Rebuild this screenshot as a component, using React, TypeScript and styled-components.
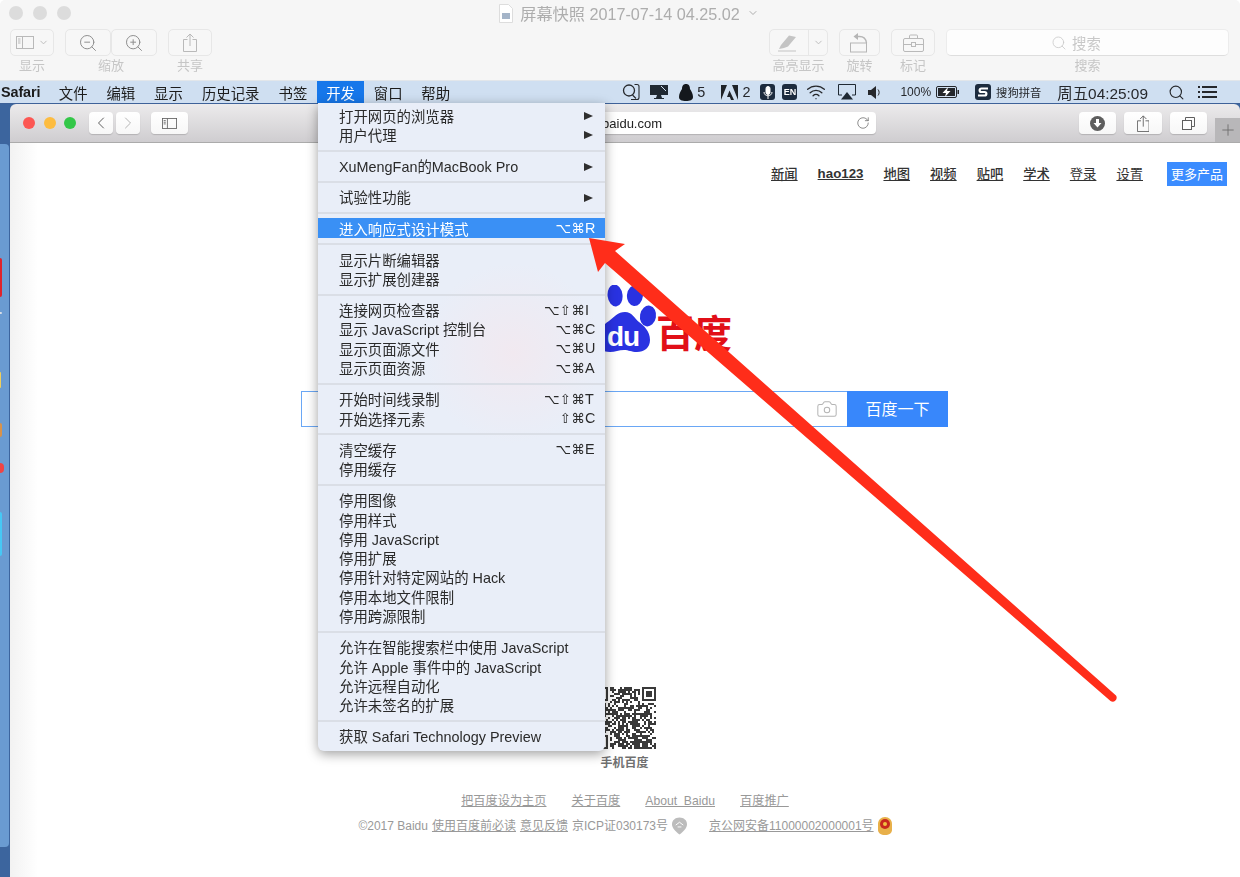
import React from "react";
import styled, { createGlobalStyle } from "styled-components";
import {
  Camera,
  ChevronDown,
  ChevronLeft,
  ChevronRight,
  Plus,
  RotateCw,
  Search,
  Wifi,
  ZoomIn,
  ZoomOut,
} from "lucide-react";

const UI_FONT = `"Liberation Sans", "Noto Sans CJK SC", "DejaVu Sans", sans-serif`;

const GlobalStyle = createGlobalStyle`
  html, body {
    margin: 0;
    background: #fff;
  }
  body {
    font-family: ${UI_FONT};
    overflow: hidden;
  }
`;

const Screen = styled.div`
  position: relative;
  width: 1240px;
  height: 877px;
  overflow: hidden;
  display: flex;
  flex-direction: column;
  filter: blur(0.35px);
`;

/* ---------- Preview window toolbar ---------- */

const PreviewBar = styled.header`
  height: 80px;
  flex: none;
  background: #f6f6f6;
  border-radius: 5px 5px 0 0;
  display: flex;
  flex-direction: column;
`;

const TitleRow = styled.div`
  height: 29px;
  flex: none;
  box-sizing: border-box;
  padding: 0 9px 3px;
  display: grid;
  grid-template-columns: 1fr auto 1fr;
  align-items: center;
`;

const GrayLights = styled.div`
  display: flex;
  gap: 10px;
`;

const GrayLight = styled.span`
  width: 14px;
  height: 14px;
  border-radius: 50%;
  background: #dcdcdc;
`;

const DocTitle = styled.div`
  display: flex;
  align-items: center;
  gap: 7px;
  font-size: 16.2px;
  color: #adadad;
  white-space: nowrap;
  padding-left: 18px;
`;

const ToolsRow = styled.div`
  display: flex;
  padding: 0 11px 0 10px;
  gap: 11px;
`;

const ToolGroup = styled.div`
  display: flex;
  flex-direction: column;
  align-items: center;
  flex: none;
`;

const ToolButtons = styled.div`
  display: flex;
`;

const ToolButton = styled.div<{ $w: number }>`
  width: ${(p) => p.$w}px;
  height: 27px;
  box-sizing: border-box;
  border: 1px solid #e7e7e7;
  border-radius: 5px;
  background: #f7f7f7;
  color: #b9b9b9;
  display: flex;
  align-items: center;
  justify-content: center;
  gap: 4px;
`;

const SplitCell = styled.div<{ $w: number; $line?: boolean }>`
  width: ${(p) => p.$w}px;
  height: 100%;
  display: flex;
  align-items: center;
  justify-content: center;
  border-left: ${(p) => (p.$line ? "1px solid #e7e7e7" : "none")};
`;

const ToolLabel = styled.span`
  font-size: 13px;
  line-height: 16px;
  margin-top: 2px;
  color: #c6c6c6;
  white-space: nowrap;
`;

const ToolSpacer = styled.div`
  flex: 1;
`;

const SearchField = styled.div`
  width: 283px;
  height: 27px;
  box-sizing: border-box;
  padding-right: 23px;
  border-radius: 5px;
  background: #fdfdfd;
  border: 1px solid #ececec;
  border-bottom: 1px solid #dedede;
  color: #c8c8c8;
  font-size: 14.4px;
  display: flex;
  align-items: center;
  justify-content: center;
  gap: 5px;
`;

/* ---------- Menu bar ---------- */

const MenuBar = styled.nav`
  height: 23px;
  flex: none;
  box-sizing: border-box;
  background: #cfdff1;
  border-top: 1px solid #e2e6ea;
  display: flex;
  align-items: center;
  font-size: 14.4px;
  color: #1c1c1c;
  white-space: nowrap;
`;

const AppName = styled.span`
  font-weight: 700;
  padding: 0 9px 0 1px;
  letter-spacing: -0.1px;
`;

const MenuTitle = styled.span<{ $active?: boolean; $w: number }>`
  height: 100%;
  display: flex;
  align-items: center;
  width: ${(p) => p.$w}px;
  justify-content: center;
  background: ${(p) => (p.$active ? "#1677ea" : "transparent")};
  color: ${(p) => (p.$active ? "#fff" : "inherit")};
`;

const StatusItems = styled.div`
  margin-left: auto;
  display: flex;
  align-items: center;
  padding-right: 23px;
  color: #26282c;
`;

const StatusCell = styled.span<{ $ml: number; $size?: number }>`
  margin-left: ${(p) => p.$ml}px;
  font-size: ${(p) => p.$size ?? 14.4}px;
  display: flex;
  align-items: center;
`;

const DarkTile = styled.span<{ $w: number }>`
  width: ${(p) => p.$w}px;
  height: 16px;
  border-radius: 3px;
  background: #1c2b3e;
  color: #fff;
  font-size: 9px;
  font-weight: 700;
  display: flex;
  align-items: center;
  justify-content: center;
`;

/* ---------- Desktop + Safari ---------- */

const Desktop = styled.div`
  flex: 1;
  display: flex;
  background: #3c659e;
  min-height: 0;
  border-top: 1px solid #3e6299;
`;

const Dock = styled.aside`
  width: 9px;
  margin: 40px 1px 30px 0;
  flex: none;
  background: #6a9bd1;
  border-radius: 0 4px 4px 0;
  display: flex;
  flex-direction: column;
  overflow: hidden;
`;

const DockIcon = styled.span<{ $mt: number; $h: number; $w: number; $c: string; $round?: boolean }>`
  margin-top: ${(p) => p.$mt}px;
  height: ${(p) => p.$h}px;
  width: ${(p) => p.$w}px;
  flex: none;
  background: ${(p) => p.$c};
  border-radius: ${(p) => (p.$round ? "0 5px 5px 0" : "0 3px 3px 0")};
`;

const SafariWindow = styled.main`
  flex: 1;
  display: flex;
  flex-direction: column;
  min-width: 0;
`;

const SafariBar = styled.div`
  height: 39px;
  flex: none;
  box-sizing: border-box;
  border-radius: 6px 6px 0 0;
  border-bottom: 1px solid #ababab;
  background: linear-gradient(#ecebec, #cfcdd0);
  display: flex;
  padding: 8px 0 0 13px;
`;

const Lights = styled.div`
  height: 22px;
  display: flex;
  align-items: center;
  gap: 8.5px;
  margin-right: 13px;
`;

const Light = styled.span<{ $c: string }>`
  width: 12px;
  height: 12px;
  border-radius: 50%;
  background: ${(p) => p.$c};
`;

const BarButton = styled.div<{ $w: number; $ml?: number; $dim?: boolean }>`
  width: ${(p) => p.$w}px;
  height: 22px;
  flex: none;
  margin-left: ${(p) => p.$ml ?? 0}px;
  border-radius: 4px;
  background: linear-gradient(#fff, #f7f7f7);
  box-shadow: 0 1px 1px rgba(0, 0, 0, 0.16);
  color: ${(p) => (p.$dim ? "#b4b4b4" : "#5f5f5f")};
  display: flex;
  align-items: center;
  justify-content: center;
`;

const UrlBar = styled.div`
  width: 546px;
  height: 22px;
  flex: none;
  margin-left: 142px;
  box-sizing: border-box;
  border-radius: 4px;
  background: #fff;
  box-shadow: 0 1px 1px rgba(0, 0, 0, 0.16);
  display: flex;
  align-items: center;
  padding: 0 6px 0 241px;
  font-size: 13px;
  color: #222;
`;

const UrlText = styled.span`
  flex: 1;
`;

const NewTab = styled.div`
  width: 25px;
  height: 24px;
  margin-left: 8px;
  margin-top: 6px;
  flex: none;
  background: #b8b7b9;
  color: #6d6d6d;
  display: flex;
  align-items: center;
  justify-content: center;
`;

/* ---------- Baidu page ---------- */

const Page = styled.section`
  flex: 1;
  min-height: 0;
  background: linear-gradient(90deg, #f2f2f2, #fff 28px);
  display: flex;
  flex-direction: column;
  align-items: center;
`;

const TopNav = styled.div`
  align-self: stretch;
  margin-top: 19px;
  height: 24px;
  display: flex;
  justify-content: flex-end;
  align-items: center;
  padding-right: 13px;
  gap: 20px;
  font-size: 13.3px;
`;

const NavLink = styled.a<{ $weight: number }>`
  position: relative;
  top: -1px;
  color: #333;
  font-weight: ${(p) => p.$weight};
  text-decoration: underline;
`;

const MoreButton = styled.span`
  width: 60px;
  height: 24px;
  box-sizing: border-box;
  padding-bottom: 2px;
  margin-left: 4px;
  background: #3b8cff;
  color: #fff;
  font-size: 13px;
  display: flex;
  align-items: center;
  justify-content: center;
`;

const LogoBox = styled.div`
  margin-top: 99px;
  height: 70px;
`;

const SearchRow = styled.div`
  margin: 36px 1px 0 0;
  width: 647px;
  height: 36px;
  display: flex;
`;

const SearchInput = styled.div`
  flex: 1;
  box-sizing: border-box;
  border: 1px solid #6aa7f5;
  border-right: none;
  display: flex;
  align-items: center;
  justify-content: flex-end;
  padding-right: 9px;
  color: #b4b4b4;
`;

const SearchSubmit = styled.div`
  width: 101px;
  background: #3887fb;
  color: #fff;
  font-size: 16px;
  padding-bottom: 2px;
  box-sizing: border-box;
  display: flex;
  align-items: center;
  justify-content: center;
`;

const QrBox = styled.div`
  margin-top: 260px;
  width: 62px;
  height: 62px;
`;

const QrCaption = styled.div`
  margin: 7px 1px 0 0;
  font-size: 12px;
  line-height: 14px;
  font-weight: 700;
  color: #707070;
`;

const FooterLinks = styled.div`
  margin-top: 23px;
  display: flex;
  gap: 25px;
  font-size: 12.2px;
  line-height: 16px;
`;

const FooterLink = styled.a<{ $gap?: number }>`
  margin-left: ${(p) => p.$gap ?? 0}px;
  color: #999;
  text-decoration: underline;
`;

const FooterLine = styled.div`
  margin-top: 8px;
  display: flex;
  align-items: center;
  gap: 4px;
  font-size: 12px;
  line-height: 16px;
  color: #999;
  white-space: nowrap;
`;

/* ---------- Develop menu ---------- */

const DropMenu = styled.div`
  position: absolute;
  left: 318px;
  top: 103px;
  width: 287px;
  height: 648px;
  box-sizing: border-box;
  padding-top: 2.5px;
  border-radius: 0 0 6px 6px;
  background: radial-gradient(circle at 195px 250px, #f1e9f0 0, rgba(241, 233, 240, 0) 90px), #e9eef8;
  box-shadow: 0 3px 12px rgba(0, 0, 0, 0.38);
  font-size: 14.4px;
  color: #2a2a2a;
`;

const MenuRow = styled.div<{ $hot?: boolean }>`
  height: 19.3px;
  display: flex;
  align-items: center;
  padding: 0 7px 0 21px;
  white-space: nowrap;
  background: ${(p) => (p.$hot ? "#3a90f5" : "transparent")};
  color: ${(p) => (p.$hot ? "#fff" : "inherit")};
`;

const MenuDivider = styled.div`
  height: 2px;
  margin: 5.6px 0 4.3px;
  background: #dadee6;
`;

const Shortcut = styled.span`
  margin-left: auto;
  display: flex;
  align-items: center;
  font-family: "DejaVu Sans", sans-serif;
  font-size: 13.5px;
`;

const ShortcutMods = styled.span`
  letter-spacing: 0.2px;
`;

const ShortcutKey = styled.span`
  width: 13px;
  font-family: "Liberation Sans", sans-serif;
  font-size: 14.4px;
`;

const SubArrow = styled.span`
  margin: 2px 5px 0 auto;
  width: 0;
  height: 0;
  border-left: 9px solid #2f2f2f;
  border-top: 4.5px solid transparent;
  border-bottom: 4.5px solid transparent;
`;

const ArrowLayer = styled.svg`
  position: absolute;
  left: 0;
  top: 0;
  pointer-events: none;
`;

/* ---------- Data ---------- */

type Item = { label: string; mods?: string; key?: string; sub?: boolean; hot?: boolean };

const menuGroups: Item[][] = [
  [
    { label: "打开网页的浏览器", sub: true },
    { label: "用户代理", sub: true },
  ],
  [{ label: "XuMengFan的MacBook Pro", sub: true }],
  [{ label: "试验性功能", sub: true }],
  [{ label: "进入响应式设计模式", mods: "⌥⌘", key: "R", hot: true }],
  [{ label: "显示片断编辑器" }, { label: "显示扩展创建器" }],
  [
    { label: "连接网页检查器", mods: "⌥⇧⌘", key: "I" },
    { label: "显示 JavaScript 控制台", mods: "⌥⌘", key: "C" },
    { label: "显示页面源文件", mods: "⌥⌘", key: "U" },
    { label: "显示页面资源", mods: "⌥⌘", key: "A" },
  ],
  [
    { label: "开始时间线录制", mods: "⌥⇧⌘", key: "T" },
    { label: "开始选择元素", mods: "⇧⌘", key: "C" },
  ],
  [{ label: "清空缓存", mods: "⌥⌘", key: "E" }, { label: "停用缓存" }],
  [
    { label: "停用图像" },
    { label: "停用样式" },
    { label: "停用 JavaScript" },
    { label: "停用扩展" },
    { label: "停用针对特定网站的 Hack" },
    { label: "停用本地文件限制" },
    { label: "停用跨源限制" },
  ],
  [
    { label: "允许在智能搜索栏中使用 JavaScript" },
    { label: "允许 Apple 事件中的 JavaScript" },
    { label: "允许远程自动化" },
    { label: "允许未签名的扩展" },
  ],
  [{ label: "获取 Safari Technology Preview" }],
];

const menuTitles = [
  { t: "文件", w: 47.6 },
  { t: "编辑", w: 47.6 },
  { t: "显示", w: 47.6 },
  { t: "历史记录", w: 77 },
  { t: "书签", w: 47.6 },
  { t: "开发", w: 47.6, active: true },
  { t: "窗口", w: 47.6 },
  { t: "帮助", w: 47.6 },
];

const navLinks = [
  { t: "新闻", w: 500 },
  { t: "hao123", w: 700 },
  { t: "地图", w: 500 },
  { t: "视频", w: 500 },
  { t: "贴吧", w: 500 },
  { t: "学术", w: 500 },
  { t: "登录", w: 400 },
  { t: "设置", w: 400 },
];

/* ---------- Drawings ---------- */

const SidebarGlyph = ({ w = 18, h = 13 }: { w?: number; h?: number }) => (
  <svg width={w} height={h} viewBox="0 0 18 13" fill="none" stroke="currentColor">
    <rect x="0.5" y="0.5" width="17" height="12" />
    <path d="M6.5 0.5v12M2 3h2.5M2 5h2.5M2 7h2.5" />
  </svg>
);

const ShareGlyph = ({ h = 19 }: { h?: number }) => (
  <svg width={(h * 14) / 19} height={h} viewBox="0 0 14 19" fill="none" stroke="currentColor">
    <path d="M4.500 6.500H.5v12h13v-12h-4" />
    <path d="M7 13V1M3.500 4.500L7 1l3.500 3.500" />
  </svg>
);

const HighlightGlyph = () => (
  <svg width="20" height="18" viewBox="0 0 20 18" fill="#c4c4c4">
    <path d="M1 16.500h18v1H1zM2 15l2-4L12 1.500l7 1.500-8 9.500-4 1.500z" />
  </svg>
);

const RotateGlyph = () => (
  <svg width="19" height="20" viewBox="0 0 19 20" fill="none" stroke="#b5b5b5" strokeWidth="1">
    <rect x="0.500" y="10" width="16" height="9" />
    <path d="M7 3.500h2.500c4 0 6.500 2.500 7 6.500" strokeWidth="1.300" />
    <path d="M8 0L3.500 3.500 8 7z" fill="#b5b5b5" stroke="none" />
  </svg>
);

const ToolboxGlyph = () => (
  <svg width="21" height="18" viewBox="0 0 21 18" fill="none" stroke="#b9b9b9">
    <rect x="0.500" y="4.500" width="20" height="13" rx="1.500" />
    <path d="M6.500 4.500v-2.500a1 1 0 0 1 1-1h6a1 1 0 0 1 1 1v2.500M.5 10.500h8M12.500 10.500h8" />
    <rect x="8.500" y="8.500" width="4" height="4" />
  </svg>
);

const DocGlyph = () => (
  <svg width="14" height="19" viewBox="0 0 14 19">
    <path d="M.5.5h9l4 4v14H.5z" fill="#fff" stroke="#ddd" />
    <rect x="3" y="9" width="8" height="6" fill="#a4b4c8" />
  </svg>
);

const QqSearchGlyph = () => (
  <svg width="18" height="18" viewBox="0 0 18 18" fill="none" stroke="#26282c" strokeWidth="1.300">
    <circle cx="7" cy="7.500" r="5.500" />
    <path d="M10.500 12l3.500 3.500M12.500 1.500h2.500a2 2 0 0 1 2 2v11a2 2 0 0 1-2 2H9" strokeWidth="1.100" />
  </svg>
);

const MonitorGlyph = () => (
  <svg width="18" height="16" viewBox="0 0 18 16" fill="#1f2933">
    <path d="M0 1h18v10H0zM7 11h4l1 3h2v1H4v-1h2z" />
    <path d="M11 2l5 5" stroke="#cfdff1" strokeWidth="1" />
  </svg>
);

const PenguinGlyph = () => (
  <svg width="14" height="17" viewBox="0 0 14 17" fill="#14181d">
    <path d="M7 0c3 0 4 2.200 4 5 1.500 2 3 5 3 8 0 3-3 4-7 4s-7-1-7-4c0-3 1.500-6 3-8 0-2.800 1-5 4-5z" />
  </svg>
);

const AdobeGlyph = () => (
  <svg width="17" height="15" viewBox="0 0 17 15" fill="#1f2328">
    <path d="M0 15V0h6zM17 15V0h-6zM8.500 5.500l4.500 9.500h-3l-1.200-3H6z" />
  </svg>
);

const MicGlyph = () => (
  <svg width="10" height="13" viewBox="0 0 10 13" fill="none" stroke="#fff" strokeWidth="1">
    <rect x="3" y="0.500" width="4" height="8" rx="2" fill="#fff" />
    <path d="M1 6c0 5 8 5 8 0M5 10v3" />
  </svg>
);

const AirplayGlyph = () => (
  <svg width="18" height="16" viewBox="0 0 18 16">
    <path d="M4 11H.5V.5h17V11H14" fill="none" stroke="#1f2933" />
    <path d="M9 8l6 7.500H3z" fill="#1f2933" />
  </svg>
);

const VolumeGlyph = () => (
  <svg width="14" height="13" viewBox="0 0 14 13" fill="#26282c">
    <path d="M0 4h3l5-4v13L3 9H0z" />
    <path d="M10 3.500c1.500 1.500 1.500 4.500 0 6" fill="none" stroke="#26282c" />
  </svg>
);

const BatteryGlyph = () => (
  <svg width="23" height="12" viewBox="0 0 23 12">
    <rect x="0.500" y="0.500" width="20" height="11" rx="1.500" fill="none" stroke="#26282c" />
    <rect x="2" y="2" width="17" height="8" fill="#26282c" />
    <rect x="21.500" y="4" width="1.500" height="4" fill="#26282c" />
    <path d="M12 1L6.500 7H10l-1 4 5.500-6H11z" fill="#fff" />
  </svg>
);

const SogouGlyph = () => (
  <svg width="12" height="12" viewBox="0 0 12 12" fill="none" stroke="#fff" strokeWidth="2.200">
    <path d="M11 2.500H4.500C2 2.500 2 6 4.500 6h3c2.500 0 2.500 3.500 0 3.500H1" />
  </svg>
);

const ListGlyph = () => (
  <svg width="19" height="12" viewBox="0 0 19 12" fill="#26282c">
    <path d="M0 0h2v2H0zM0 5h2v2H0zM0 10h2v2H0zM4 0h15v2H4zM4 5h15v2H4zM4 10h15v2H4z" />
  </svg>
);

const TabsGlyph = () => (
  <svg width="13" height="13" viewBox="0 0 13 13" fill="none" stroke="currentColor">
    <rect x="0.500" y="3.500" width="9" height="9" fill="#fff" />
    <path d="M3.500 3.500v-3h9v9h-3" />
  </svg>
);

const DownloadGlyph = () => (
  <svg width="15" height="15" viewBox="0 0 15 15">
    <circle cx="7.500" cy="7.500" r="7.500" fill="#5e5e5e" />
    <path d="M6 3h3v4h2.500l-4 4.500-4-4.500H6z" fill="#fff" />
  </svg>
);

const BaiduLogo = () => (
  <svg width="240" height="70" viewBox="505 285 240 70">
    <g fill="#2932e1">
      <ellipse cx="615" cy="295.500" rx="7.500" ry="11" transform="rotate(-6 615 295)" />
      <ellipse cx="635" cy="295.500" rx="8" ry="10.500" transform="rotate(6 635 295)" />
      <ellipse cx="648" cy="316" rx="8" ry="10.500" transform="rotate(10 648 316)" />
      <path d="M625 312c7 0 9 6 14 10 5 4 11 9 11 18 0 8-6 12-13 12-6 0-8-2-13-2s-9 2-14 2c-8 0-14-4-14-12 0-9 7-15 13-19 5-4 9-9 16-9z" />
    </g>
    <text x="607" y="346" fontFamily="Liberation Sans, sans-serif" fontWeight="700" fontSize="28" letterSpacing="-1" fill="#fff">
      du
    </text>
    <text x="656" y="347" fontFamily="Noto Sans CJK SC, sans-serif" fontWeight="700" fontSize="38" fill="#e10f18">
      百度
    </text>
  </svg>
);

// deterministic pseudo random pattern for the QR body
const qrCells = (() => {
  const n = 31;
  const cells: [number, number][] = [];
  const finder = (cx: number, cy: number) => {
    for (let y = 0; y < 7; y++)
      for (let x = 0; x < 7; x++) {
        const edge = x === 0 || y === 0 || x === 6 || y === 6;
        const core = x >= 2 && x <= 4 && y >= 2 && y <= 4;
        if (edge || core) cells.push([cx + x, cy + y]);
      }
  };
  finder(0, 0);
  finder(n - 7, 0);
  finder(0, n - 7);
  let seed = 73;
  for (let y = 0; y < n; y++)
    for (let x = 0; x < n; x++) {
      seed = (seed * 1103515245 + 12345) & 0x7fffffff;
      const inFinder = (x < 8 && y < 8) || (x > n - 9 && y < 8) || (x < 8 && y > n - 9);
      if (!inFinder && (seed >> 16) % 100 < 55) cells.push([x, y]);
    }
  return cells;
})();

const QrCode = () => (
  <svg width="62" height="62" viewBox="0 0 31 31" shapeRendering="crispEdges" fill="#3a3a3a">
    {qrCells.map(([x, y]) => (
      <rect key={`${x}-${y}`} x={x} y={y} width="1" height="1" />
    ))}
  </svg>
);

const PinGlyph = () => (
  <svg width="15" height="18" viewBox="0 0 16 18">
    <path d="M8 0c4.500 0 8 3 8 7 0 4-4 8-8 11-4-3-8-7-8-11 0-4 3.500-7 8-7z" fill="#bcbcbc" />
    <path d="M4 8l4-3 4 3M6 10h4" fill="none" stroke="#fff" />
  </svg>
);

const PoliceGlyph = () => (
  <svg width="14" height="18" viewBox="0 0 14 18">
    <path d="M7 0c4 0 7 3 7 7v6c0 3-3 5-7 5s-7-2-7-5V7c0-4 3-7 7-7z" fill="#e8b04a" />
    <circle cx="7" cy="7" r="5" fill="#c8281e" />
    <circle cx="7" cy="7" r="2" fill="#f0c040" />
  </svg>
);

const RedArrow = () => (
  <ArrowLayer width="1240" height="877" viewBox="0 0 1240 877">
    <path
      d="M589 238L625 244L615 251L1116 695.500A4 4 0 0 1 1110.500 701L605 263L598 272Z"
      fill="#ff2d1a"
    />
  </ArrowLayer>
);

export default function App() {
  return (
    <Screen>
      <GlobalStyle />
      <PreviewBar>
        <TitleRow>
          <GrayLights>
            <GrayLight />
            <GrayLight />
            <GrayLight />
          </GrayLights>
          <DocTitle>
            <DocGlyph />
            屏幕快照 2017-07-14 04.25.02
            <ChevronDown size={12} />
          </DocTitle>
        </TitleRow>
        <ToolsRow>
          <ToolGroup>
            <ToolButtons>
              <ToolButton $w={44}>
                <SidebarGlyph />
                <ChevronDown size={11} strokeWidth={2} />
              </ToolButton>
            </ToolButtons>
            <ToolLabel>显示</ToolLabel>
          </ToolGroup>
          <ToolGroup>
            <ToolButtons>
              <ToolButton $w={46}>
                <ZoomOut size={20} strokeWidth={1.2} color="#8f8f8f" />
              </ToolButton>
              <ToolButton $w={46}>
                <ZoomIn size={20} strokeWidth={1.2} color="#8f8f8f" />
              </ToolButton>
            </ToolButtons>
            <ToolLabel>缩放</ToolLabel>
          </ToolGroup>
          <ToolGroup>
            <ToolButtons>
              <ToolButton $w={44}>
                <ShareGlyph />
              </ToolButton>
            </ToolButtons>
            <ToolLabel>共享</ToolLabel>
          </ToolGroup>
          <ToolSpacer />
          <ToolGroup>
            <ToolButton $w={59}>
              <SplitCell $w={39}>
                <HighlightGlyph />
              </SplitCell>
              <SplitCell $w={20} $line>
                <ChevronDown size={11} strokeWidth={2} />
              </SplitCell>
            </ToolButton>
            <ToolLabel>高亮显示</ToolLabel>
          </ToolGroup>
          <ToolGroup>
            <ToolButton $w={41}>
              <RotateGlyph />
            </ToolButton>
            <ToolLabel>旋转</ToolLabel>
          </ToolGroup>
          <ToolGroup>
            <ToolButton $w={44}>
              <ToolboxGlyph />
            </ToolButton>
            <ToolLabel>标记</ToolLabel>
          </ToolGroup>
          <ToolGroup>
            <SearchField>
              <Search size={16} strokeWidth={1.2} />
              搜索
            </SearchField>
            <ToolLabel>搜索</ToolLabel>
          </ToolGroup>
        </ToolsRow>
      </PreviewBar>

      <MenuBar>
        <AppName>Safari</AppName>
        {menuTitles.map((m) => (
          <MenuTitle key={m.t} $w={m.w} $active={m.active}>
            {m.t}
          </MenuTitle>
        ))}
        <StatusItems>
          <StatusCell $ml={0}>
            <QqSearchGlyph />
          </StatusCell>
          <StatusCell $ml={10}>
            <MonitorGlyph />
          </StatusCell>
          <StatusCell $ml={11}>
            <PenguinGlyph />
          </StatusCell>
          <StatusCell $ml={4}>5</StatusCell>
          <StatusCell $ml={16}>
            <AdobeGlyph />
          </StatusCell>
          <StatusCell $ml={4}>2</StatusCell>
          <StatusCell $ml={10}>
            <DarkTile $w={15}>
              <MicGlyph />
            </DarkTile>
          </StatusCell>
          <StatusCell $ml={7}>
            <DarkTile $w={15}>EN</DarkTile>
          </StatusCell>
          <StatusCell $ml={9}>
            <Wifi size={20} strokeWidth={1.6} />
          </StatusCell>
          <StatusCell $ml={12}>
            <AirplayGlyph />
          </StatusCell>
          <StatusCell $ml={12}>
            <VolumeGlyph />
          </StatusCell>
          <StatusCell $ml={18} $size={12}>
            100%
          </StatusCell>
          <StatusCell $ml={5}>
            <BatteryGlyph />
          </StatusCell>
          <StatusCell $ml={16}>
            <DarkTile $w={16}>
              <SogouGlyph />
            </DarkTile>
          </StatusCell>
          <StatusCell $ml={5} $size={11.3}>
            搜狗拼音
          </StatusCell>
          <StatusCell $ml={16} $size={15.4}>
            周五04:25:09
          </StatusCell>
          <StatusCell $ml={20}>
            <Search size={17} strokeWidth={1.6} />
          </StatusCell>
          <StatusCell $ml={13}>
            <ListGlyph />
          </StatusCell>
        </StatusItems>
      </MenuBar>

      <Desktop>
        <Dock>
          <DockIcon $mt={114} $h={39} $w={2} $c="#e0232b" />
          <DockIcon $mt={15} $h={2} $w={2} $c="#d8dee6" />
          <DockIcon $mt={58} $h={16} $w={1} $c="#f0cf5c" />
          <DockIcon $mt={35} $h={14} $w={2} $c="#d9924a" />
          <DockIcon $mt={26} $h={10} $w={4} $c="#ef4444" $round />
          <DockIcon $mt={39} $h={44} $w={2} $c="#46c8f5" />
        </Dock>
        <SafariWindow>
          <SafariBar>
            <Lights>
              <Light $c="#fc5753" />
              <Light $c="#fdbc40" />
              <Light $c="#33c748" />
            </Lights>
            <BarButton $w={24}>
              <ChevronLeft size={20} strokeWidth={1.2} />
            </BarButton>
            <BarButton $w={24} $ml={3} $dim>
              <ChevronRight size={20} strokeWidth={1.2} />
            </BarButton>
            <BarButton $w={37} $ml={11}>
              <SidebarGlyph w={15} h={11} />
            </BarButton>
            <UrlBar>
              <UrlText>www.baidu.com</UrlText>
              <RotateCw size={14} strokeWidth={1.3} color="#6b6b6b" />
            </UrlBar>
            <BarButton $w={37} $ml={203}>
              <DownloadGlyph />
            </BarButton>
            <BarButton $w={38} $ml={8}>
              <ShareGlyph h={17} />
            </BarButton>
            <BarButton $w={37} $ml={8}>
              <TabsGlyph />
            </BarButton>
            <NewTab>
              <Plus size={18} strokeWidth={1.2} />
            </NewTab>
          </SafariBar>

          <Page>
            <TopNav>
              {navLinks.map((l) => (
                <NavLink key={l.t} $weight={l.w}>
                  {l.t}
                </NavLink>
              ))}
              <MoreButton>更多产品</MoreButton>
            </TopNav>
            <LogoBox>
              <BaiduLogo />
            </LogoBox>
            <SearchRow>
              <SearchInput>
                <Camera size={22} strokeWidth={1.1} />
              </SearchInput>
              <SearchSubmit>百度一下</SearchSubmit>
            </SearchRow>
            <QrBox>
              <QrCode />
            </QrBox>
            <QrCaption>手机百度</QrCaption>
            <FooterLinks>
              <FooterLink>把百度设为主页</FooterLink>
              <FooterLink>关于百度</FooterLink>
              <FooterLink>About&nbsp;&nbsp;Baidu</FooterLink>
              <FooterLink>百度推广</FooterLink>
            </FooterLinks>
            <FooterLine>
              ©2017 Baidu <FooterLink>使用百度前必读</FooterLink> <FooterLink>意见反馈</FooterLink> 京ICP证030173号
              <PinGlyph />
              <FooterLink $gap={18}>京公网安备11000002000001号</FooterLink>
              <PoliceGlyph />
            </FooterLine>
          </Page>
        </SafariWindow>
      </Desktop>

      <DropMenu>
        {menuGroups.map((group, i) => (
          <React.Fragment key={i}>
            {i > 0 && <MenuDivider />}
            {group.map((item) => (
              <MenuRow key={item.label} $hot={item.hot}>
                {item.label}
                {item.sub && <SubArrow />}
                {item.key && (
                  <Shortcut>
                    <ShortcutMods>{item.mods}</ShortcutMods>
                    <ShortcutKey>{item.key}</ShortcutKey>
                  </Shortcut>
                )}
              </MenuRow>
            ))}
          </React.Fragment>
        ))}
      </DropMenu>
      <RedArrow />
    </Screen>
  );
}
